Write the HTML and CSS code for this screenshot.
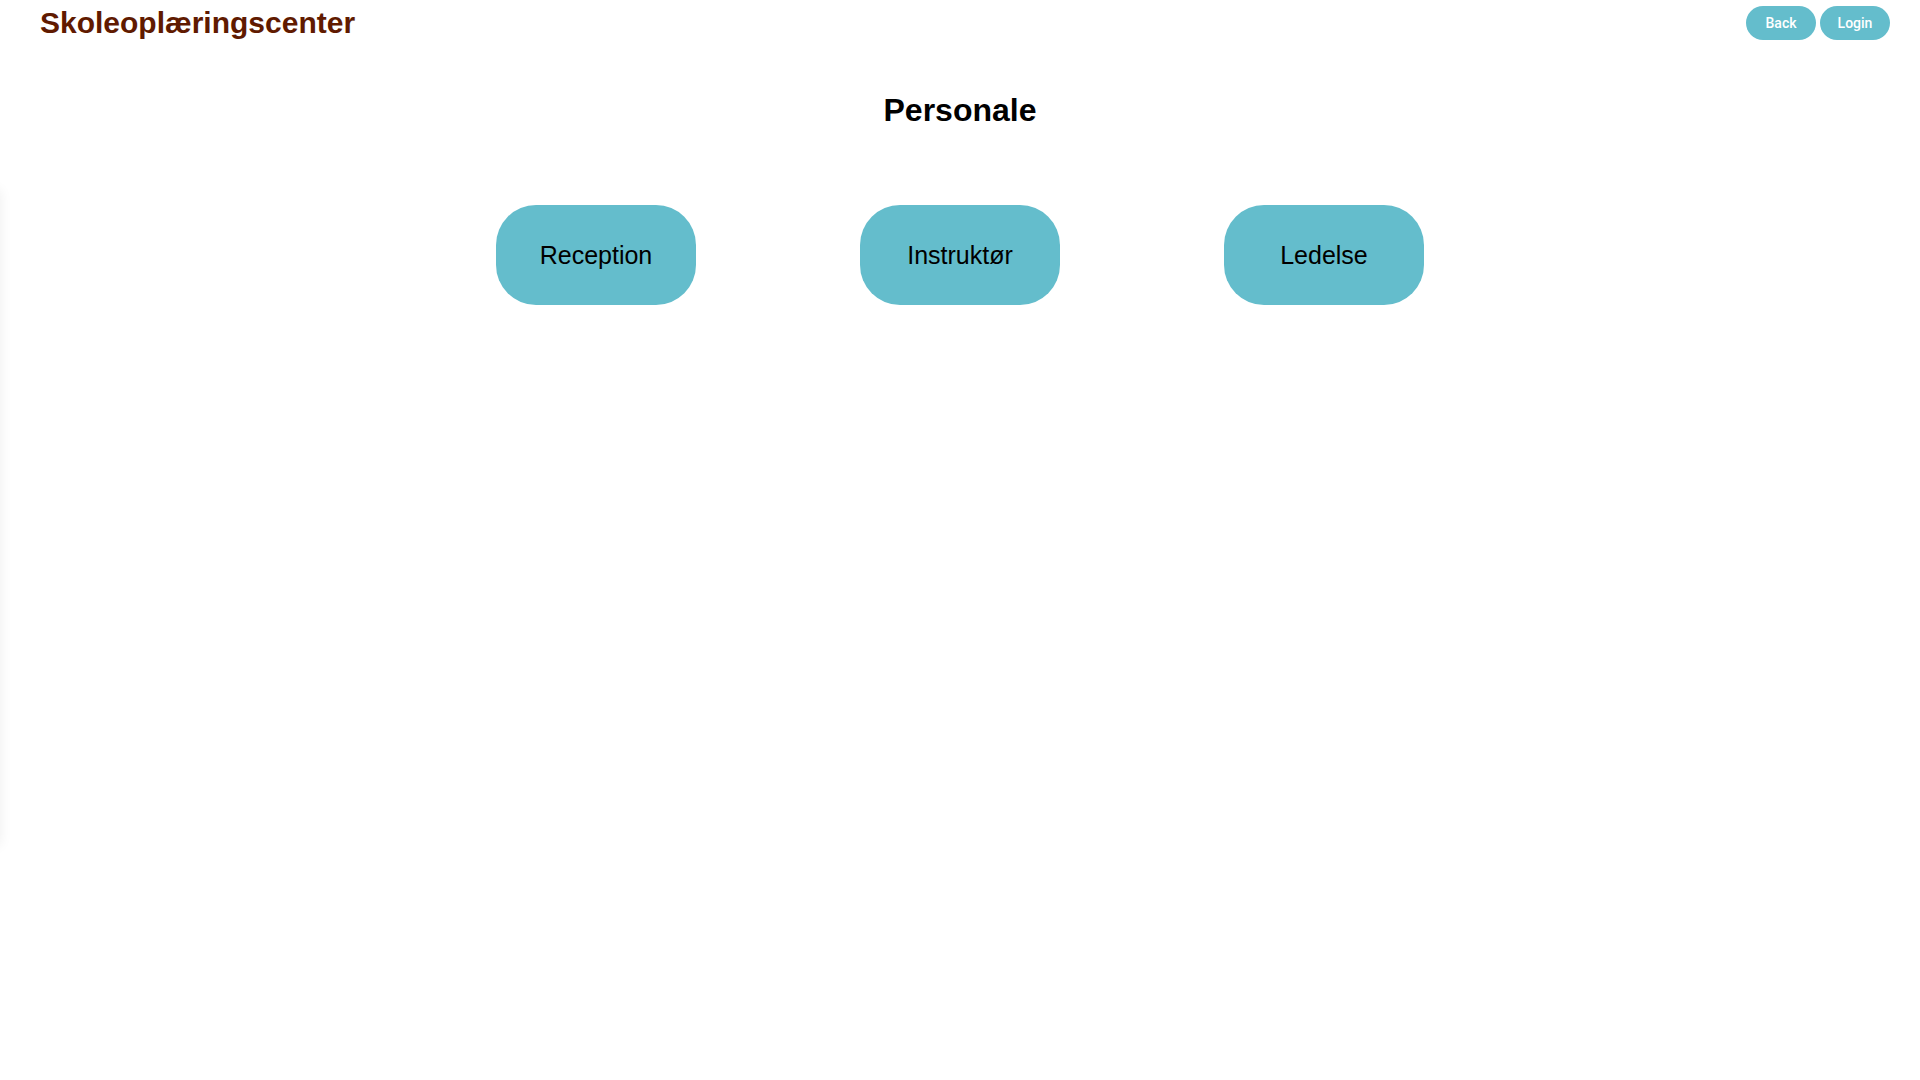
FILE: index.html
```html
<!DOCTYPE html>
<html lang="da">
<head>
<meta charset="utf-8">
<title>Skoleoplæringscenter</title>
<link rel="stylesheet" href="styles.css">
</head>
<body>
<div class="side-shadow"></div>
<header class="topbar">
  <h1 class="brand">Skoleoplæringscenter</h1>
  <nav class="nav">
    <button class="pill">Back</button>
    <button class="pill">Login</button>
  </nav>
</header>
<main class="content">
  <h2 class="page-title">Personale</h2>
  <div class="choices">
    <button class="choice">Reception</button>
    <button class="choice">Instruktør</button>
    <button class="choice">Ledelse</button>
  </div>
</main>
</body>
</html>
```
FILE: styles.css
```css
html, body {
  margin: 0;
  padding: 0;
  background: #ffffff;
  font-family: "Liberation Sans", Arial, sans-serif;
}
.side-shadow {
  position: fixed;
  left: -400px;
  top: 190px;
  width: 400px;
  height: 655px;
  box-shadow: 0 0 12px rgba(0, 0, 0, 0.07);
}
.topbar {
  display: flex;
  justify-content: space-between;
  align-items: flex-start;
  padding: 0 30px 0 40px;
  height: 60px;
}
.brand {
  margin: 6px 0 0 0;
  font-size: 30px;
  line-height: 34px;
  font-weight: bold;
  color: #601a00;
}
.nav {
  display: flex;
  gap: 4px;
  padding-top: 6px;
}
.pill {
  width: 70px;
  height: 34px;
  border: none;
  border-radius: 17px;
  background: #64bdcc;
  color: #ffffff;
  font-family: Roboto, "Liberation Sans", sans-serif;
  font-size: 14px;
  font-weight: 500;
  padding: 0;
  cursor: pointer;
}
.content {
  display: flex;
  flex-direction: column;
  align-items: center;
}
.page-title {
  margin: 32px 0 0 0;
  font-size: 32px;
  line-height: 37px;
  font-weight: bold;
  color: #000000;
}
.choices {
  display: flex;
  gap: 164px;
  margin-top: 76px;
}
.choice {
  width: 200px;
  height: 100px;
  border: none;
  border-radius: 40px;
  background: #64bdcc;
  color: #000000;
  font-family: "Liberation Sans", Arial, sans-serif;
  font-size: 25px;
  padding: 0;
  cursor: pointer;
}
```
